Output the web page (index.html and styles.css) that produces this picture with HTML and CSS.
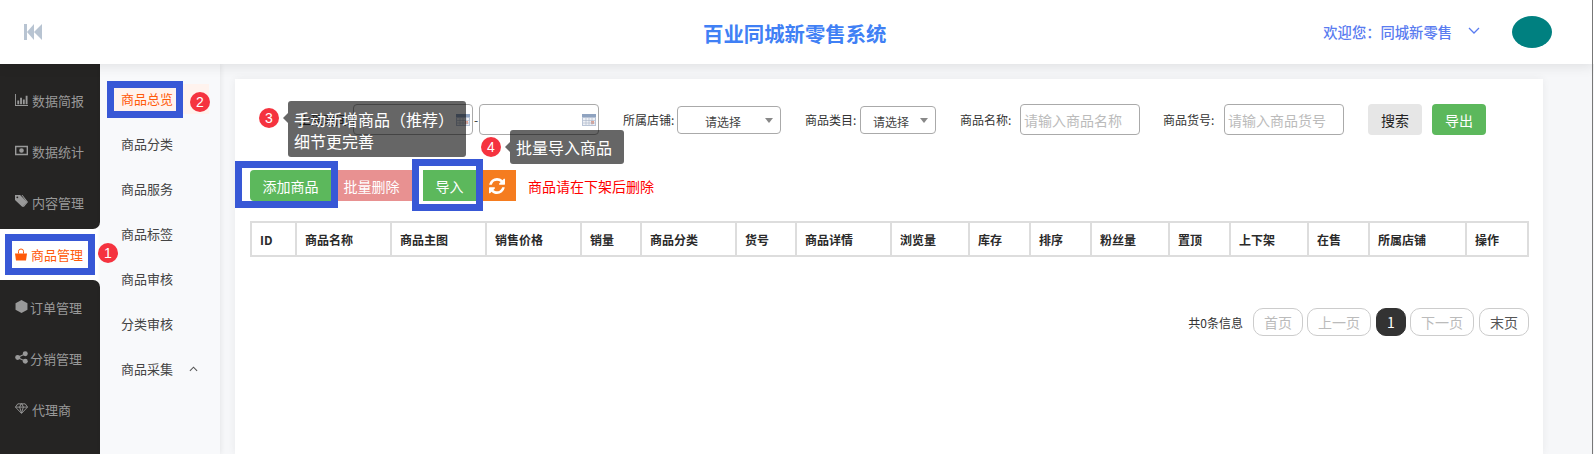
FILE: index.html
```html
<!DOCTYPE html>
<html lang="zh-CN">
<head>
<meta charset="utf-8">
<title>百业同城新零售系统</title>
<link rel="stylesheet" href="styles.css">
</head>
<body>
<header class="top">
  <svg class="collapse" viewBox="0 0 18 16"><path d="M0 0h3v16H0zM3 8l7-8v16zM10 8l8-8v16z"/></svg>
  <h1 class="brand">百业同城新零售系统</h1>
  <div class="user">
    <span class="welcome">欢迎您：同城新零售</span>
    <svg class="caret" viewBox="0 0 12 8"><path d="M1 1l5 5 5-5"/></svg>
    <span class="avatar"></span>
  </div>
</header>
<div class="frame">
  <nav class="side">
    <div class="side-group side-first">
      <a class="side-item"><svg class="ico" viewBox="0 0 14 14"><path d="M0 1h1v12h13v1H0zM2.500 8h2v4h-2zM5.500 5h2v7h-2zM8.500 7h2v5h-2zM11.500 3h2v9h-2z"/></svg>数据简报</a>
      <a class="side-item"><svg class="ico" viewBox="0 0 14 12"><path fill-rule="evenodd" d="M0 1h14v10H0zM1.500 2.500v7h11v-7zM7 3.500a2.500 2.500 0 1 1 0 5 2.500 2.500 0 0 1 0-5z"/></svg>数据统计</a>
      <a class="side-item"><svg class="ico" viewBox="0 0 14 14"><path fill-rule="evenodd" d="M0 0h5.500L13 7.500 8 13 0 5.500zM2.500 1.500a1 1 0 1 0 0 2 1 1 0 0 0 0-2z"/><path d="M7 0h1l6 7.500L9.500 13l-1-.7L12.500 7.500z"/></svg>内容管理</a>
    </div>
    <a class="side-item side-active"><svg class="ico" viewBox="0 0 12 12"><path d="M0 5h12l-1 7H1z"/><path class="ico-line" d="M3.500 5V2.800a2.500 2.300 0 0 1 5 0V5"/></svg>商品管理</a>
    <div class="side-group side-last">
      <a class="side-item tight"><svg class="ico" viewBox="0 0 12 12"><path d="M6 0l5.500 3v6L6 12 .5 9V3z"/></svg>订单管理</a>
      <a class="side-item tight"><svg class="ico" viewBox="0 0 12 12"><circle cx="2.500" cy="6" r="2.300"/><circle cx="9.500" cy="2.500" r="2.300"/><circle cx="9.500" cy="9.500" r="2.300"/><path class="ico-line" d="M2.500 6l7-3.500M2.500 6l7 3.500"/></svg>分销管理</a>
      <a class="side-item"><svg class="ico" viewBox="0 0 14 12"><path class="ico-line" d="M3 1h8l2.500 3.500L7 11.300.5 4.500zM.5 4.500h13M5 4.500L7 11l2-6.500L7.500 1h-1z"/></svg>代理商</a>
    </div>
  </nav>
  <aside class="sub">
    <a class="sub-item sub-active"><span>商品总览</span></a>
    <a class="sub-item"><span>商品分类</span></a>
    <a class="sub-item"><span>商品服务</span></a>
    <a class="sub-item"><span>商品标签</span></a>
    <a class="sub-item"><span>商品审核</span></a>
    <a class="sub-item"><span>分类审核</span></a>
    <a class="sub-item"><span>商品采集</span><svg class="up" viewBox="0 0 10 6"><path d="M1 5l4-4 4 4"/></svg></a>
  </aside>
  <main class="main">
    <section class="card">
      <form class="filters">
        <label class="lab lab-date">上架时间:</label>
        <span class="date"><input class="field field-date"><svg class="cal" viewBox="0 0 14 12"><rect width="14" height="12" fill="#b9c4d6"/><rect y="0" width="14" height="3" fill="#8fa3c0"/><path d="M1 4h12v7H1z" fill="#eef1f6"/><path d="M9 7h3v3H9z" fill="#e9a08a"/><path d="M1 6.500h12M1 9h12M4 4v7M7 4v7M10 4v7" stroke="#a8b4c8" stroke-width=".6"/></svg></span>
        <span class="dash">-</span>
        <span class="date"><input class="field field-date"><svg class="cal" viewBox="0 0 14 12"><rect width="14" height="12" fill="#b9c4d6"/><rect y="0" width="14" height="3" fill="#8fa3c0"/><path d="M1 4h12v7H1z" fill="#eef1f6"/><path d="M9 7h3v3H9z" fill="#e9a08a"/><path d="M1 6.500h12M1 9h12M4 4v7M7 4v7M10 4v7" stroke="#a8b4c8" stroke-width=".6"/></svg></span>
        <label class="lab lab-shop">所属店铺:</label>
        <span class="sel sel-shop">请选择</span>
        <label class="lab lab-cat">商品类目:</label>
        <span class="sel sel-cat">请选择</span>
        <label class="lab lab-name">商品名称:</label>
        <input class="field" placeholder="请输入商品名称">
        <label class="lab lab-code">商品货号:</label>
        <input class="field" placeholder="请输入商品货号">
        <button type="button" class="btn btn-search">搜索</button>
        <button type="button" class="btn btn-export">导出</button>
      </form>
      <div class="actions">
        <button type="button" class="act act-add">添加商品</button>
        <button type="button" class="act act-del">批量删除</button>
        <button type="button" class="act act-import">导入</button>
        <button type="button" class="act act-refresh"><svg viewBox="0 0 1536 1536"><path d="M1511 928q0 5-1 7-64 268-268 434.500t-478 166.500q-146 0-282.500-55t-243.500-157l-129 129q-19 19-45 19t-45-19-19-45v-448q0-26 19-45t45-19h448q26 0 45 19t19 45-19 45l-137 137q71 66 161 102t187 36q134 0 250-65t186-179q11-17 53-117 8-23 30-23h192q13 0 22.500 9.500t9.500 22.500zm25-800v448q0 26-19 45t-45 19h-448q-26 0-45-19t-19-45 19-45l138-138q-148-137-349-137-134 0-250 65t-186 179q-11 17-53 117-8 23-30 23h-199q-13 0-22.500-9.500t-9.500-22.500v-7q65-268 270-434.500t480-166.500q146 0 284 55.500t245 156.500l130-129q19-19 45-19t45 19 19 45z"/></svg></button>
        <span class="warn">商品请在下架后删除</span>
      </div>
      <table class="grid">
        <colgroup>
          <col class="c45"><col class="c95"><col class="c95"><col class="c95"><col class="c60"><col class="c95"><col class="c60"><col class="c95"><col class="c78"><col class="c61"><col class="c61"><col class="c78"><col class="c61"><col class="c78"><col class="c61"><col class="c97"><col class="c62">
        </colgroup>
        <thead>
          <tr><th>ID</th><th>商品名称</th><th>商品主图</th><th>销售价格</th><th>销量</th><th>商品分类</th><th>货号</th><th>商品详情</th><th>浏览量</th><th>库存</th><th>排序</th><th>粉丝量</th><th>置顶</th><th>上下架</th><th>在售</th><th>所属店铺</th><th>操作</th></tr>
        </thead>
      </table>
      <div class="pager">
        <span class="total">共0条信息</span>
        <a class="pg pg-off pg-2">首页</a>
        <a class="pg pg-off pg-3">上一页</a>
        <a class="pg pg-on">1</a>
        <a class="pg pg-off pg-3">下一页</a>
        <a class="pg pg-2 pg-last">末页</a>
      </div>
    </section>
  </main>
</div>

<div class="mark mark-side"></div>
<div class="mark mark-sub"></div>
<div class="mark mark-add"></div>
<div class="mark mark-import"></div>
<span class="num num-1">1</span>
<span class="num num-2">2</span>
<span class="num num-3">3</span>
<span class="num num-4">4</span>
<div class="tip tip-3">手动新增商品（推荐）<br>细节更完善</div>
<div class="tip tip-4">批量导入商品</div>
</body>
</html>
```
FILE: styles.css
```css
* { box-sizing: border-box; }
html, body { margin: 0; height: 100%; }
body {
  width: 1594px; height: 454px; overflow: hidden; position: relative;
  font-family: "Noto Sans CJK SC", "Liberation Sans", sans-serif;
  font-size: 12px; color: #333; background: #f6f7f9;
}
body::after {
  content: ""; position: absolute; right: 1px; top: 0; bottom: 0; width: 1px; background: #777; z-index: 6;
}
a { display: block; }

/* header */
.top {
  height: 64px; background: #fff; position: relative; z-index: 2;
  display: flex; align-items: center; justify-content: space-between;
  padding: 0 42px 0 24px; box-shadow: 0 2px 12px rgba(0,0,0,.1);
}
.collapse { width: 18px; height: 16px; fill: #b8c4d2; }
.brand {
  position: absolute; left: 703px; top: 17px; margin: 0;
  font-size: 20.400px; line-height: 32px; font-weight: 700; color: #4080f5;
}
.user { display: flex; align-items: center; }
.welcome { font-size: 14.300px; color: #5a7cf0; line-height: 20px; font-weight: 500; }
.caret { width: 12px; height: 8px; margin: -2px 0 0 16px; fill: none; stroke: #5a7cf0; stroke-width: 1.300; }
.avatar { width: 40px; height: 32px; border-radius: 50%; background: #008080; margin-left: 32px; }

/* body frame */
.frame { display: flex; height: 390px; overflow: hidden; }

/* first sidebar */
.side { width: 100px; background: #fff; flex: none; }
.side-group { background: #252423; color: #999; }
.side-first { padding-top: 11px; border-bottom-right-radius: 7px; height: 165px; }
.side-last { padding-top: 2px; border-top-right-radius: 7px; height: 174px; }
.side-item {
  height: 51px; padding-left: 15px; display: flex; align-items: center;
  font-size: 13px; color: #999; white-space: nowrap;
}
.side-item.tight .ico { margin-right: 2px; }
.side-active { color: #ff5a0a; }
.ico { width: 13px; height: 13px; margin: -2px 4px 0 0; fill: #999; flex: none; }
.side-active .ico { fill: #ff5a0a; width: 12px; margin: 0 4px 0 0; }
.ico-line { fill: none; stroke: #999; stroke-width: 1; }
.side-active .ico-line { stroke: #ff5a0a; }

/* second sidebar */
.sub {
  width: 120px; background: #f8f9fb; flex: none; padding-top: 12px;
  box-shadow: 1px 0 5px rgba(0,0,0,.07); position: relative;
}
.sub-item {
  height: 45px; padding-left: 21px; display: flex; align-items: center;
  font-size: 13px; color: #444; position: relative;
}
.sub-active { color: #ff5a0a; }
.sub-active::before {
  content: ""; position: absolute; left: 14px; top: 8px; width: 95px; height: 30px; background: #fff3ee;
}
.sub-active span { position: relative; }
.up { width: 9px; height: 6px; margin-left: 16px; fill: none; stroke: #555; stroke-width: 1.200; }

/* main */
.main { flex: 1; padding: 15px 51px 0 15px; min-width: 0; }
.card { background: #fff; height: 100%; padding: 25px 15px 0; box-shadow: 0 0 8px rgba(0,0,0,.06); }

.filters { display: flex; align-items: center; height: 31px; white-space: nowrap; }
.lab { display: block; font-size: 12px; color: #333; flex: none; }
.lab-date { width: 103px; padding-left: 49px; }
.lab-shop { width: 54px; margin-left: 24px; }
.lab-cat { width: 55px; margin-left: 24px; }
.lab-name { width: 60px; margin-left: 24px; }
.lab-code { width: 61px; margin-left: 23px; }
.field {
  width: 120px; height: 31px; border: 1px solid #aaa; border-radius: 4px; padding: 0 3px;
  font: 14px "Noto Sans CJK SC", "Liberation Sans", sans-serif; background: #fff; outline: 0; flex: none;
}
.field::placeholder { color: #bbb; opacity: 1; }
.date { position: relative; display: block; width: 120px; height: 31px; flex: none; }
.cal { position: absolute; right: 3px; top: 10px; width: 14px; height: 12px; }
.dash { width: 6px; text-align: center; flex: none; }
.sel {
  display: block; height: 28px; border: 1px solid #aaa; border-radius: 4px; flex: none;
  line-height: 30px; font-size: 12px; color: #444; position: relative; margin-top: 1px;
}
.sel::after {
  content: ""; position: absolute; right: 7px; top: 11px;
  border: 4px solid transparent; border-top: 5px solid #888; border-bottom: 0;
}
.sel-shop { width: 104px; padding-left: 27px; }
.sel-cat { width: 76px; padding-left: 12px; }
.btn {
  width: 54px; height: 31px; border: 0; border-radius: 4px; padding: 0; flex: none;
  font: 14px "Noto Sans CJK SC", "Liberation Sans", sans-serif;
}
.btn-search { background: #e6e6e6; color: #222; margin-left: 24px; }
.btn-export { background: #5cb85c; color: #fff; margin-left: 10px; }

.actions { display: flex; align-items: center; height: 31px; margin-top: 35px; }
.act {
  height: 31px; border: 0; padding: 0; color: #fff; flex: none;
  font: 14px "Noto Sans CJK SC", "Liberation Sans", sans-serif;
}
.act-add { width: 81px; background: #5cb85c; border-radius: 4px 0 0 4px; }
.act-del { width: 81px; background: #e89191; }
.act-import { width: 53px; background: #5cb85c; margin-left: 11px; }
.act-refresh { width: 33px; background: #f57c1f; margin-left: 7px; display: flex; align-items: center; padding-left: 6px; }
.act-refresh svg { width: 16px; height: 16px; fill: #fff; }
.warn { margin-left: 12px; font-size: 14px; color: #f00; }

.grid {
  width: 1279px; margin-top: 20px; border-collapse: separate; border-spacing: 0; table-layout: fixed;
  border-top: 2px solid #ddd; border-left: 2px solid #ddd;
}
.grid th {
  height: 34px; padding: 0 0 0 8px; border-right: 2px solid #ddd; border-bottom: 2px solid #ddd; text-align: left;
  font-size: 12px; font-weight: 700; color: #2a2a2a;
}
.c45 { width: 45px; } .c60 { width: 60px; } .c61 { width: 61px; } .c62 { width: 62px; }
.c78 { width: 78px; } .c95 { width: 95px; } .c97 { width: 97px; }

.pager { display: flex; justify-content: flex-end; align-items: center; margin: 51px -1px 0 0; }
.total { font-size: 12px; margin-right: 6px; color: #333; }
.pg {
  height: 28px; line-height: 26px; text-align: center; border: 1px solid #ccc; border-radius: 10px;
  font-size: 14px; margin-left: 4px; color: #555;
}
.pg-off { color: #bbb; }
.pg-2 { width: 50px; }
.pg-3 { width: 64px; }
.pg-on { width: 30px; background: #333; border-color: #333; color: #fff; margin-left: 5px; }
.pg-last { margin-left: 5px; }

/* annotations over the page */
.mark { position: absolute; border: 7px solid #3858d6; z-index: 3; }
.mark-side { left: 5px; top: 234px; width: 90px; height: 41px; }
.mark-sub { left: 107px; top: 81px; width: 76px; height: 37px; }
.mark-add { left: 235px; top: 161px; width: 103px; height: 47px; }
.mark-import { left: 412px; top: 159px; width: 71px; height: 52px; }
.num {
  position: absolute; width: 20px; height: 20px; border-radius: 50%; background: #f5333f; color: #fff;
  font: 14px/20px "Liberation Sans", sans-serif; text-align: center; z-index: 5;
}
.num-1 { left: 98px; top: 243px; }
.num-2 { left: 190px; top: 92px; }
.num-3 { left: 259px; top: 108px; }
.num-4 { left: 481px; top: 137px; }
.tip {
  position: absolute; z-index: 4; background: rgba(0,0,0,.6); color: #fff; border-radius: 3px;
  font-size: 16px; line-height: 22px; padding: 7px 6px; white-space: nowrap;
}
.tip::before {
  content: ""; position: absolute; left: -5px; border: 5px solid transparent;
  border-right-color: rgba(0,0,0,.6); border-left: 0;
}
.tip-3 { left: 288px; top: 101px; width: 178px; height: 56px; }
.tip-3::before { top: 12px; }
.tip-4 { left: 510px; top: 130px; width: 114px; height: 34px; padding-top: 6px; }
.tip-4::before { top: 12px; }
```
